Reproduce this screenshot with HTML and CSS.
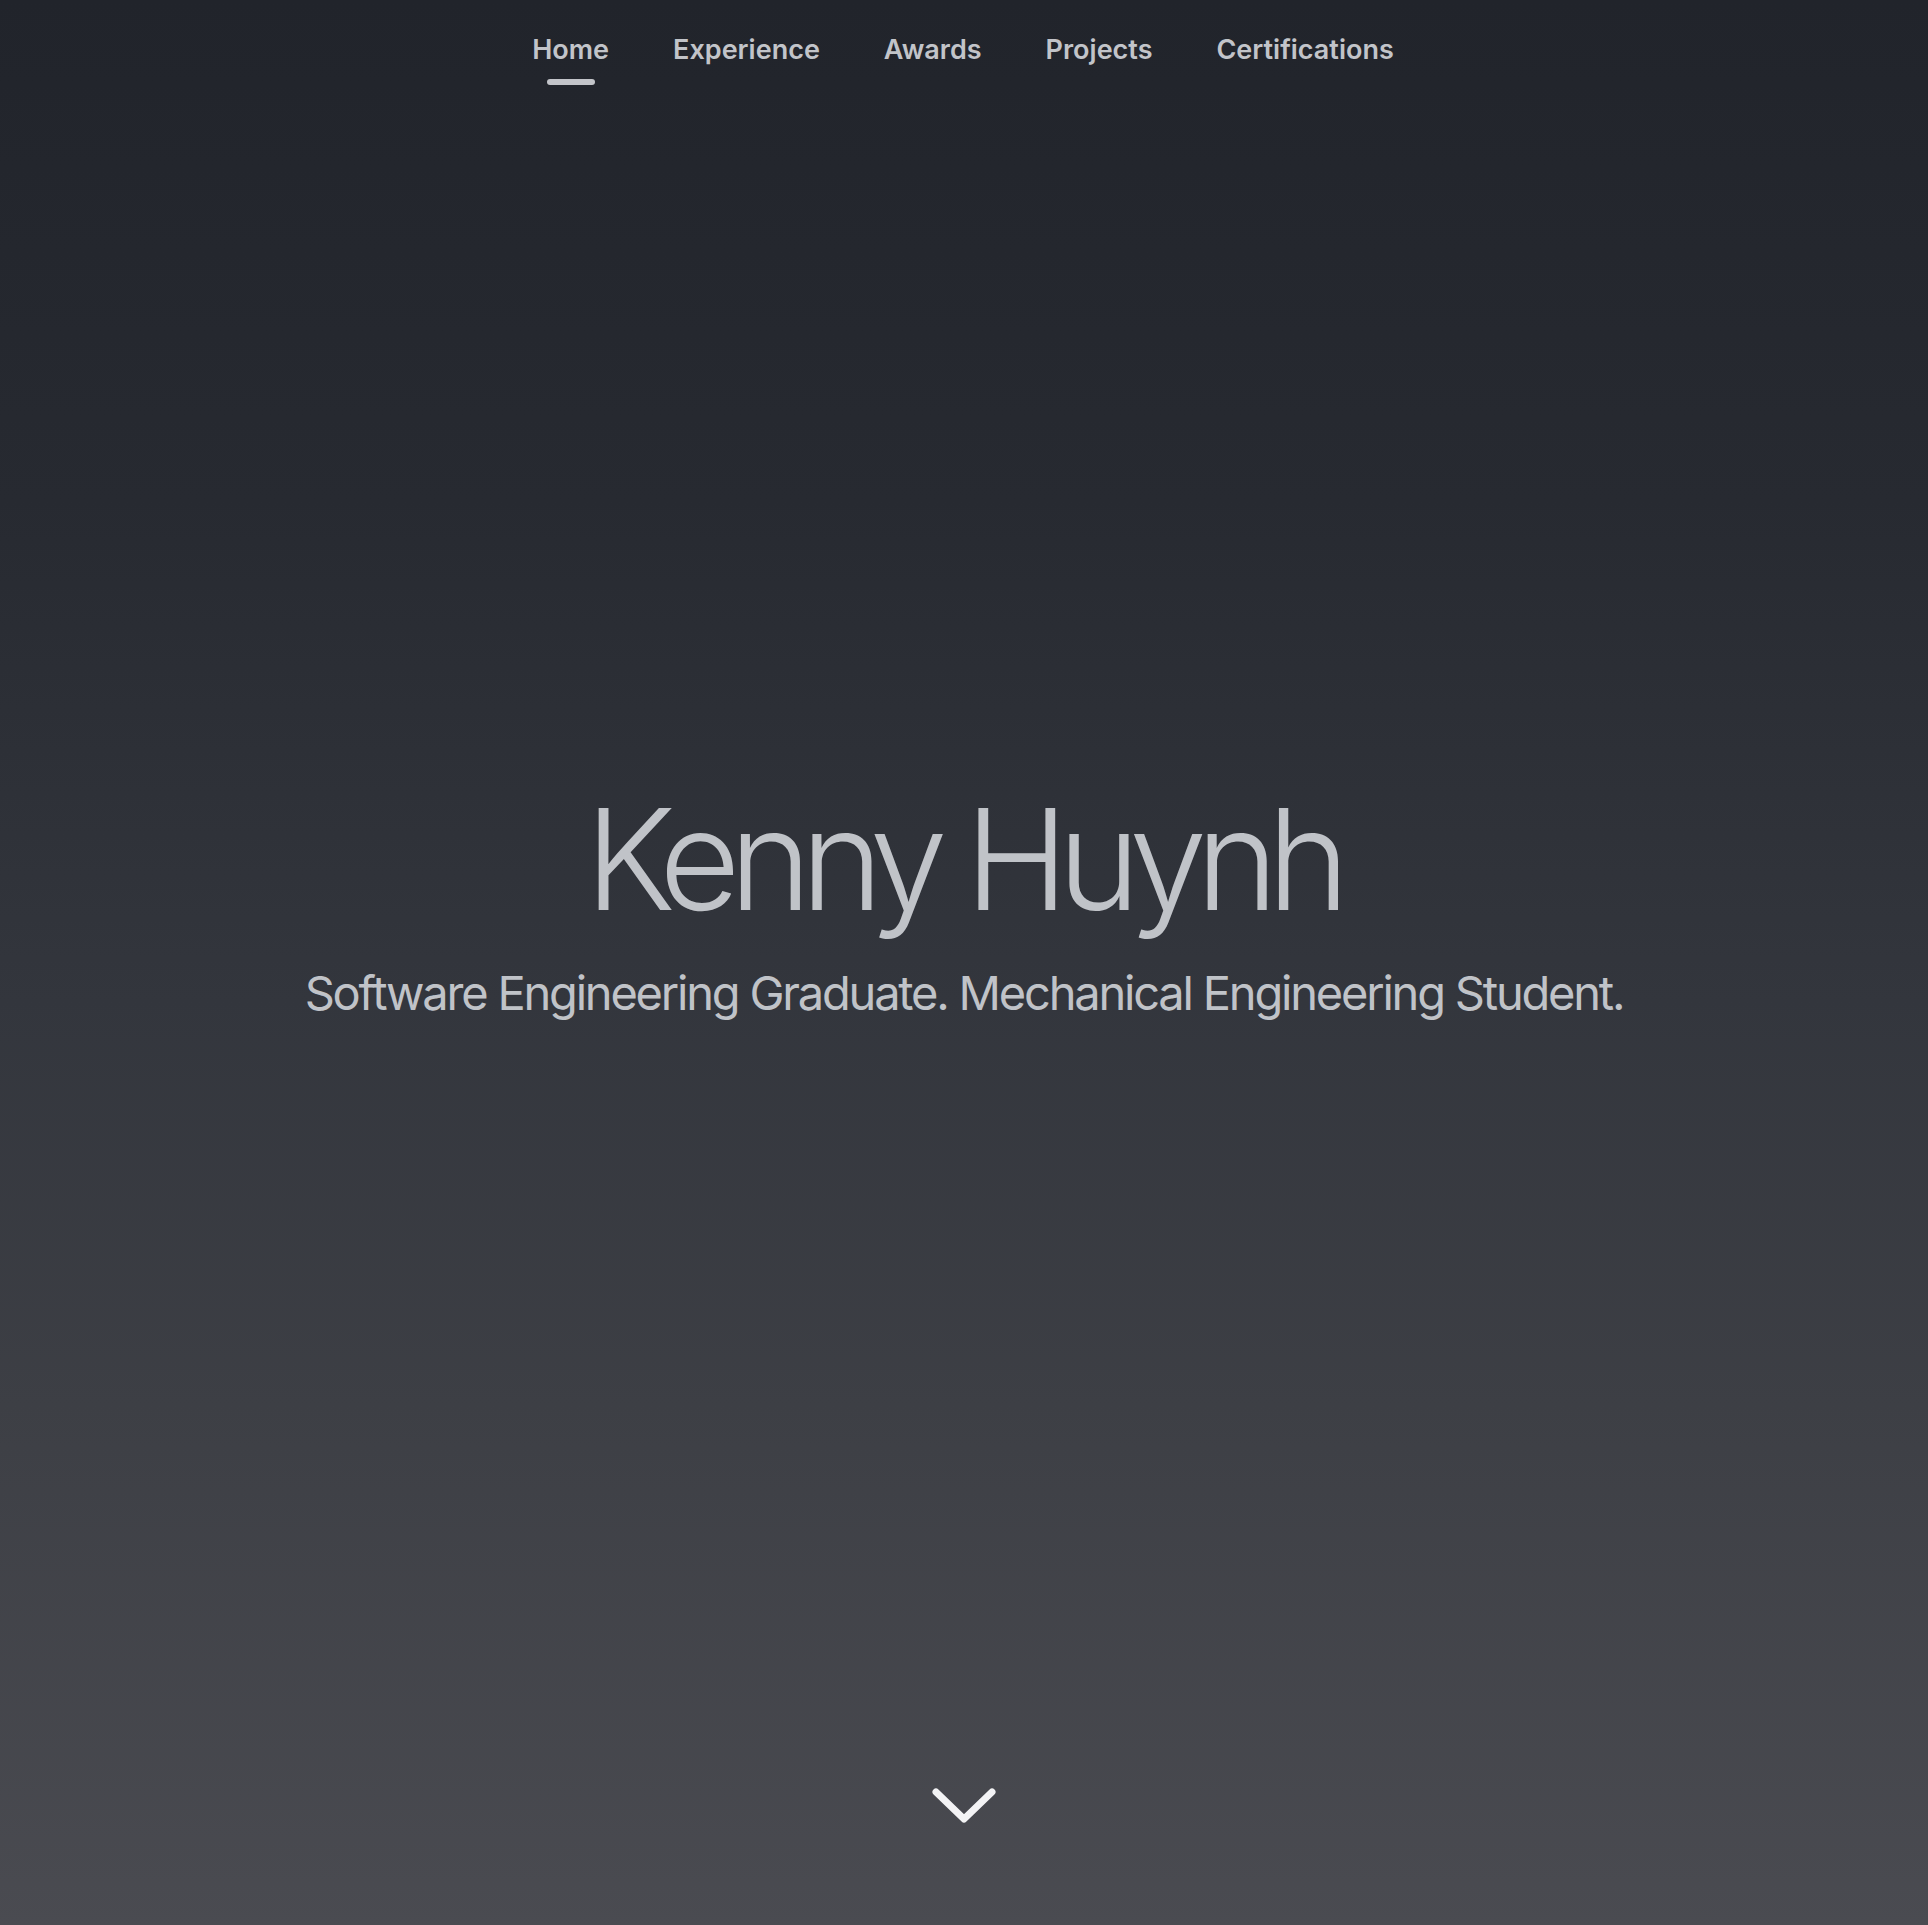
FILE: index.html
```html
<!DOCTYPE html>
<html lang="en">
<head>
<meta charset="utf-8">
<title>Kenny Huynh</title>
<link rel="stylesheet" href="styles.css">
</head>
<body>
<div class="page">
  <nav class="nav">
    <a class="nav-item active" href="#">Home</a>
    <a class="nav-item" href="#">Experience</a>
    <a class="nav-item" href="#">Awards</a>
    <a class="nav-item" href="#">Projects</a>
    <a class="nav-item" href="#">Certifications</a>
  </nav>
  <main class="hero">
    <h1 class="title">Kenny Huynh</h1>
    <p class="subtitle">Software Engineering Graduate. Mechanical Engineering Student.</p>
  </main>
  <div class="scroll">
    <svg class="chevron" viewBox="0 0 64 36" width="64" height="36">
      <path d="M4 4 L32 31 L60 4" fill="none" stroke="#f3f3f5" stroke-width="7" stroke-linecap="round" stroke-linejoin="round"/>
    </svg>
  </div>
</div>
</body>
</html>
```
FILE: styles.css
```css
* { box-sizing: border-box; }
html, body { margin: 0; padding: 0; }
body {
  font-family: Inter, "Noto Sans", "Liberation Sans", sans-serif;
  background: #4a4b51;
}
.page {
  height: 1925px;
  display: flex;
  flex-direction: column;
  background: linear-gradient(to bottom, #21242b 0%, #272a31 26%, #33363d 52%, #3d3f45 73%, #4a4b51 100%);
}
.nav {
  display: flex;
  justify-content: center;
  gap: 64px;
  padding-top: 34px;
  padding-right: 2px;
}
.nav-item {
  position: relative;
  font-size: 27px;
  font-weight: 600;
  color: #c2c4c9;
  text-decoration: none;
  letter-spacing: 0;
  line-height: 32px;
}
.nav-item.active::after {
  content: "";
  position: absolute;
  left: 50%;
  transform: translateX(-50%);
  top: 45px;
  width: 48px;
  height: 6px;
  border-radius: 3px;
  background: #c2c4c9;
}
.hero {
  flex: 1;
  display: flex;
  flex-direction: column;
  align-items: center;
  padding-top: 708px;
}
.title {
  margin: 0;
  font-size: 140px;
  font-weight: 300;
  color: #c0c3c8;
  letter-spacing: -11px;
  line-height: 170px;
  padding-right: 4px;
}
.subtitle {
  margin: 0;
  margin-top: 21px;
  font-size: 47px;
  font-weight: 400;
  color: #c0c3c8;
  letter-spacing: -2.2px;
  line-height: 56px;
}
.scroll {
  display: flex;
  justify-content: center;
  padding-bottom: 101px;
}
.chevron { display: block; }
```
